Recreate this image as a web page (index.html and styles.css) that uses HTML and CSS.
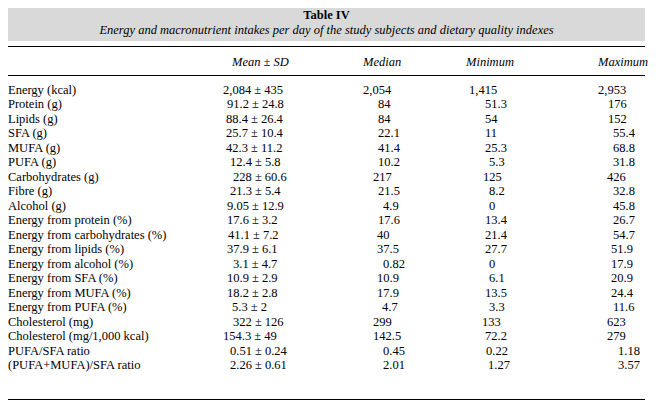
FILE: index.html
```html
<!DOCTYPE html>
<html>
<head>
<meta charset="utf-8">
<link rel="stylesheet" href="styles.css">
</head>
<body>
<div class="table">
  <div class="caption">
    <div class="title">Table IV</div>
    <div class="subtitle">Energy and macronutrient intakes per day of the study subjects and dietary quality indexes</div>
  </div>
  <div class="head row">
    <span></span>
    <span class="h-mean">Mean ± SD</span>
    <span>Median</span>
    <span class="h-min">Minimum</span>
    <span class="h-max">Maximum</span>
  </div>
  <div class="body">
    <div class="row"><span>Energy (kcal)</span><span>2,084 ± 435</span><span>2,054</span><span>1,415</span><span>2,953</span></div>
    <div class="row"><span>Protein (g)</span><span class="o4">91.2 ± 24.8</span><span class="o15">84</span><span class="o16">51.3</span><span class="o10">176</span></div>
    <div class="row"><span>Lipids (g)</span><span class="o3">88.4 ± 26.4</span><span class="o15">84</span><span class="o16">54</span><span class="o10">152</span></div>
    <div class="row"><span>SFA (g)</span><span class="o3">25.7 ± 10.4</span><span class="o15">22.1</span><span class="o16">11</span><span class="o15">55.4</span></div>
    <div class="row"><span>MUFA (g)</span><span class="o3">42.3 ± 11.2</span><span class="o15">41.4</span><span class="o16">25.3</span><span class="o15">68.8</span></div>
    <div class="row"><span>PUFA (g)</span><span class="o7">12.4 ± 5.8</span><span class="o15">10.2</span><span class="o20">5.3</span><span class="o15">31.8</span></div>
    <div class="row"><span>Carbohydrates (g)</span><span class="o10">228 ± 60.6</span><span class="o10">217</span><span class="o14">125</span><span class="o9">426</span></div>
    <div class="row"><span>Fibre (g)</span><span class="o7">21.3 ± 5.4</span><span class="o15">21.5</span><span class="o20">8.2</span><span class="o15">32.8</span></div>
    <div class="row"><span>Alcohol (g)</span><span class="o4">9.05 ± 12.9</span><span class="o20">4.9</span><span class="o20">0</span><span class="o15">45.8</span></div>
    <div class="row"><span>Energy from protein (%)</span><span class="o4">17.6 ± 3.2</span><span class="o15">17.6</span><span class="o16">13.4</span><span class="o15">26.7</span></div>
    <div class="row"><span>Energy from carbohydrates (%)</span><span class="o5">41.1 ± 7.2</span><span class="o14">40</span><span class="o16">21.4</span><span class="o15">54.7</span></div>
    <div class="row"><span>Energy from lipids (%)</span><span class="o4">37.9 ± 6.1</span><span class="o14">37.5</span><span class="o16">27.7</span><span class="o13">51.9</span></div>
    <div class="row"><span>Energy from alcohol (%)</span><span class="o10">3.1 ± 4.7</span><span class="o20">0.82</span><span class="o20">0</span><span class="o13">17.9</span></div>
    <div class="row"><span>Energy from SFA (%)</span><span class="o4">10.9 ± 2.9</span><span class="o14">10.9</span><span class="o20">6.1</span><span class="o13">20.9</span></div>
    <div class="row"><span>Energy from MUFA (%)</span><span class="o4">18.2 ± 2.8</span><span class="o14">17.9</span><span class="o16">13.5</span><span class="o13">24.4</span></div>
    <div class="row"><span>Energy from PUFA (%)</span><span class="o9">5.3 ± 2</span><span class="o19">4.7</span><span class="o20">3.3</span><span class="o15">11.6</span></div>
    <div class="row"><span>Cholesterol (mg)</span><span class="o10">322 ± 126</span><span class="o10">299</span><span class="o13">133</span><span class="o9">623</span></div>
    <div class="row"><span>Cholesterol (mg/1,000 kcal)</span><span>154.3 ± 49</span><span class="o10">142.5</span><span class="o16">72.2</span><span class="o9">279</span></div>
    <div class="row"><span>PUFA/SFA ratio</span><span class="o7">0.51 ± 0.24</span><span class="o20">0.45</span><span class="o17">0.22</span><span class="o20">1.18</span></div>
    <div class="row"><span>(PUFA+MUFA)/SFA ratio</span><span class="o7">2.26 ± 0.61</span><span class="o20">2.01</span><span class="o19">1.27</span><span class="o20">3.57</span></div>
  </div>
</div>
</body>
</html>
```

FILE: styles.css
```css
html, body {
  background: #ffffff;
}
body {
  margin: 8px;
  font-family: "Liberation Serif", "Times New Roman", serif;
  font-size: 12.5px;
  color: #000000;
}
.table {
  width: 637px;
}
.caption {
  background: #d9d9d9;
  text-align: center;
  line-height: 14.5px;
  padding: 0 0 4px;
}
.title {
  font-weight: bold;
}
.subtitle {
  font-style: italic;
}
.row {
  display: grid;
  grid-template-columns: 215px 140px 106px 129px 47px;
  height: 14.5px;
  line-height: 14.5px;
  white-space: nowrap;
}
.head {
  margin-top: 5px;
  border-top: 1px solid #000;
  border-bottom: 1px solid #000;
  padding: 8px 0 5px;
  font-style: italic;
  height: auto;
}
.h-mean { padding-left: 9px; }
.h-min { margin-left: -3px; }
.h-max { margin-left: 0; }
.body {
  padding: 7px 0 26px;
  border-bottom: 1px solid #000;
}
.o3 { padding-left: 3px; }
.o4 { padding-left: 4px; }
.o5 { padding-left: 5px; }
.o7 { padding-left: 7px; }
.o9 { padding-left: 9px; }
.o10 { padding-left: 10px; }
.o13 { padding-left: 13px; }
.o14 { padding-left: 14px; }
.o15 { padding-left: 15px; }
.o16 { padding-left: 16px; }
.o17 { padding-left: 17px; }
.o19 { padding-left: 19px; }
.o20 { padding-left: 20px; }
```
